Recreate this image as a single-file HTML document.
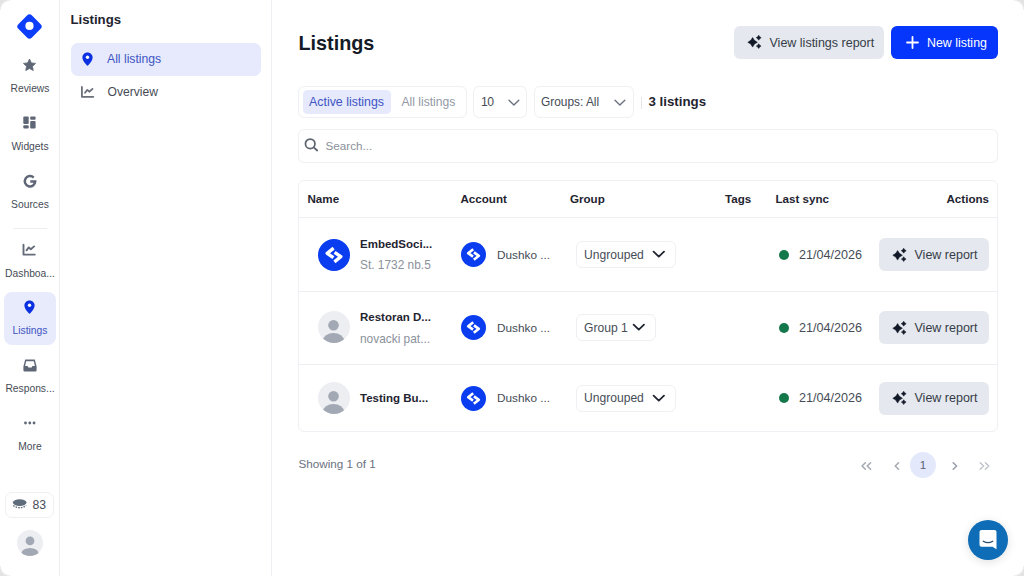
<!DOCTYPE html>
<html><head><meta charset="utf-8">
<style>
*{box-sizing:border-box;margin:0;padding:0}
html,body{width:1024px;height:576px;overflow:hidden;background:#fff}
body{font-family:"Liberation Sans",sans-serif;position:relative;color:#1f2937}
.a{position:absolute}
.t{position:absolute;white-space:nowrap;line-height:20px;height:20px}
.rail{left:0;top:0;width:60px;height:576px;border-right:1px solid #eceef1}
.side{left:60px;top:0;width:212px;height:576px;border-right:1px solid #eceef1}
.rl{font-size:10.3px;color:#464c56;width:60px;text-align:center;left:0}
.box{border:1px solid #eef0f3;border-radius:6px;background:#fff}
.th{font-size:11.6px;font-weight:bold;color:#1f2430}
.nm{font-size:11.5px;font-weight:bold;color:#1f2430}
.sub{font-size:11.9px;color:#8b919b}
.acc{font-size:11.8px;color:#464c56}
.dd{border:1px solid #eef0f3;border-radius:6px;height:27px}
.btn{background:#e5e8ee;border-radius:6px}
.date{font-size:12.6px;color:#464c56}
svg{position:absolute;overflow:visible}
</style></head>
<body>
<!-- RAIL -->
<div class="a rail"></div>
<svg style="left:17.2px;top:13.6px" width="25" height="25" viewBox="0 0 25 25">
  <rect x="3" y="3" width="19" height="19" rx="3.2" transform="rotate(45 12.5 12.5)" fill="#0d3efc"/>
  <circle cx="12.5" cy="11.9" r="4.1" fill="#fff"/>
</svg>
<!-- star -->
<svg style="left:22px;top:58px" width="15" height="14" viewBox="0 0 24 24">
  <path d="M12 1.8l3.1 6.6 7.2.9-5.3 5 1.4 7.1L12 18l-6.4 3.4 1.4-7.1-5.3-5 7.2-.9z" fill="#5f6776" stroke="#5f6776" stroke-width="1.5" stroke-linejoin="round"/>
</svg>
<div class="t rl" style="top:78.8px">Reviews</div>
<!-- widgets -->
<svg style="left:23.3px;top:116px" width="13" height="13" viewBox="0 0 13 13" fill="#5f6776">
  <rect x="0.3" y="0.4" width="5.4" height="7.6" rx="1"/>
  <rect x="0.3" y="9.3" width="5.4" height="3.3" rx="1"/>
  <rect x="7.2" y="0.4" width="5.4" height="3.3" rx="1"/>
  <rect x="7.2" y="5" width="5.4" height="7.6" rx="1"/>
</svg>
<div class="t rl" style="top:137px">Widgets</div>
<!-- G -->
<svg style="left:23px;top:173.6px" width="14" height="14" viewBox="0 0 14 14">
  <path d="M10.7 3.6A5.2 5.2 0 1 0 12.2 7.4H7.3" fill="none" stroke="#5f6776" stroke-width="2.5"/>
</svg>
<div class="t rl" style="top:195px">Sources</div>
<div class="a" style="left:13px;top:228px;width:34px;height:1px;background:#eceef1"></div>
<!-- chart -->
<svg style="left:22.1px;top:243px" width="14" height="13" viewBox="0 0 14 13">
  <path d="M1.5 1.8v9.8h11.3" fill="none" stroke="#646b78" stroke-width="1.9" stroke-linecap="round" stroke-linejoin="round"/>
  <path d="M4.5 7.3L6.8 4.4 8.8 6.2l3.3-2.8" fill="none" stroke="#646b78" stroke-width="1.9" stroke-linecap="round" stroke-linejoin="round"/>
</svg>
<div class="t rl" style="top:264px">Dashboa...</div>
<div class="a" style="left:3.5px;top:292px;width:52.5px;height:53px;background:#e8ebfb;border-radius:8px"></div>
<!-- pin -->
<svg style="left:23.9px;top:300px" width="11" height="14" viewBox="0 0 11 14">
  <path d="M5.5 0.4C2.6 0.4 0.4 2.6 0.4 5.4c0 3.3 4.2 7.9 5.1 8.3.9-.4 5.1-5 5.1-8.3C10.6 2.6 8.4 0.4 5.5 0.4z" fill="#0a30e2"/>
  <circle cx="5.5" cy="5.3" r="1.7" fill="#fff"/>
</svg>
<div class="t rl" style="top:321px;color:#4055c4">Listings</div>
<!-- inbox -->
<svg style="left:23px;top:359px" width="14" height="13" viewBox="0 0 14 13">
  <path d="M2.2 0.6h9.6l1.8 7v3.6a1.4 1.4 0 0 1-1.4 1.4H1.8A1.4 1.4 0 0 1 0.4 11.2V7.6z" fill="#5f6776"/>
  <path d="M3.2 2.3h7.6l1.1 4.6H9.4l-.8 1.6H5.4l-.8-1.6H2.1z" fill="#fff"/>
</svg>
<div class="t rl" style="top:378.8px">Respons...</div>
<svg style="left:23px;top:421px" width="14" height="4" viewBox="0 0 14 4" fill="#5f6776">
  <circle cx="2.5" cy="2" r="1.4"/><circle cx="6.8" cy="2" r="1.4"/><circle cx="11.05" cy="2" r="1.4"/>
</svg>
<div class="t rl" style="top:437px">More</div>
<div class="a" style="left:5px;top:492px;width:48.5px;height:26px;border:1px solid #eef0f3;border-radius:7px"></div>
<svg style="left:12px;top:498px" width="16" height="12" viewBox="0 0 16 12">
  <ellipse cx="7.7" cy="4.6" rx="6.8" ry="3.4" fill="#5f6c7c"/>
  <path d="M1.2 7.5 Q7.7 12 14.2 7.5" fill="none" stroke="#5f6c7c" stroke-width="1.3" stroke-dasharray="1.6 1.1"/>
</svg>
<div class="t" style="left:32.5px;top:494.5px;font-size:12.2px;color:#464c56">83</div>
<svg style="left:16.5px;top:529.5px" width="26" height="26" viewBox="0 0 32 32">
  <defs><clipPath id="cu"><circle cx="16" cy="16" r="16"/></clipPath></defs>
  <circle cx="16" cy="16" r="16" fill="#eceef2"/>
  <g clip-path="url(#cu)" fill="#a3a9b4"><circle cx="16" cy="13.5" r="5.4"/><ellipse cx="16" cy="28.5" rx="10.5" ry="6.5"/></g>
</svg>

<!-- SECONDARY SIDEBAR -->
<div class="a side"></div>
<div class="t" style="left:70.5px;top:9.5px;font-size:13.2px;font-weight:bold;color:#1f2430">Listings</div>
<div class="a" style="left:71px;top:43px;width:190px;height:33px;background:#e6eafc;border-radius:7px"></div>
<svg style="left:82px;top:51.5px" width="11" height="14" viewBox="0 0 11 14">
  <path d="M5.5 0.4C2.6 0.4 0.4 2.6 0.4 5.4c0 3.3 4.2 7.9 5.1 8.3.9-.4 5.1-5 5.1-8.3C10.6 2.6 8.4 0.4 5.5 0.4z" fill="#0a30e2"/>
  <circle cx="5.5" cy="5.3" r="1.7" fill="#fff"/>
</svg>
<div class="t" style="left:107px;top:49.3px;font-size:12.2px;color:#4055c4">All listings</div>
<svg style="left:81px;top:85.5px" width="14" height="13" viewBox="0 0 14 13">
  <path d="M0.9 0.9v9.9h11.4" fill="none" stroke="#6a707b" stroke-width="1.8" stroke-linecap="round" stroke-linejoin="round"/>
  <path d="M4 6.7L6.3 3.9 8.3 5.7l3.2-2.8" fill="none" stroke="#6a707b" stroke-width="1.8" stroke-linecap="round" stroke-linejoin="round"/>
</svg>
<div class="t" style="left:107.5px;top:82.2px;font-size:12.1px;color:#464c56">Overview</div>

<!-- MAIN -->
<div class="t" style="left:298.5px;top:33px;font-size:19.8px;font-weight:bold;color:#141a26;line-height:20px">Listings</div>

<div class="a btn" style="left:734px;top:26px;width:150px;height:33px"></div>
<svg style="left:742px;top:30px" width="24" height="24" viewBox="0 0 24 24" fill="#111827">
  <path d="M10.60 7.50Q11.94 10.96 15.40 12.30Q11.94 13.64 10.60 17.10Q9.26 13.64 5.80 12.30Q9.26 10.96 10.60 7.50ZM16.70 5.20Q17.45 6.95 19.20 7.70Q17.45 8.45 16.70 10.20Q15.95 8.45 14.20 7.70Q15.95 6.95 16.70 5.20ZM16.70 13.70Q17.42 15.38 19.10 16.10Q17.42 16.82 16.70 18.50Q15.98 16.82 14.30 16.10Q15.98 15.38 16.70 13.70Z" stroke="#111827" stroke-width="0.5" stroke-linejoin="round"/>
</svg>
<div class="t" style="left:769.5px;top:32.5px;font-size:12.5px;color:#353c48">View listings report</div>

<div class="a" style="left:891px;top:26px;width:107px;height:33px;background:#0635fb;border-radius:6px"></div>
<svg style="left:905.5px;top:36px" width="13" height="13" viewBox="0 0 13 13">
  <path d="M6.5 1v11M1 6.5h11" stroke="#fff" stroke-width="1.8" stroke-linecap="round"/>
</svg>
<div class="t" style="left:927px;top:32.5px;font-size:12.4px;color:#fff">New listing</div>

<!-- filters -->
<div class="a box" style="left:298px;top:86px;width:169px;height:32px"></div>
<div class="a" style="left:303px;top:90.3px;width:88px;height:24px;background:#e6eafc;border-radius:4.5px"></div>
<div class="t" style="left:309px;top:91.7px;font-size:12.4px;color:#4055c4">Active listings</div>
<div class="t" style="left:401.5px;top:91.7px;font-size:12.1px;color:#9399a3">All listings</div>

<div class="a box" style="left:473px;top:86px;width:54px;height:32px"></div>
<div class="t" style="left:481px;top:91.7px;font-size:12.2px;color:#464c56;letter-spacing:-0.6px">10</div>
<svg style="left:508px;top:99px" width="12" height="8" viewBox="0 0 12 8">
  <path d="M1 1.2l4.9 4.9 4.9-4.9" fill="none" stroke="#6b7280" stroke-width="1.4" stroke-linecap="round" stroke-linejoin="round"/>
</svg>
<div class="a box" style="left:534px;top:86px;width:100px;height:32px"></div>
<div class="t" style="left:541px;top:91.7px;font-size:11.9px;color:#464c56">Groups: All</div>
<svg style="left:614px;top:99px" width="12" height="8" viewBox="0 0 12 8">
  <path d="M1 1.2l4.9 4.9 4.9-4.9" fill="none" stroke="#6b7280" stroke-width="1.4" stroke-linecap="round" stroke-linejoin="round"/>
</svg>
<div class="a" style="left:640.5px;top:96.5px;width:1px;height:12px;background:#e3e5e9"></div>
<div class="t" style="left:648.5px;top:91.5px;font-size:13.3px;font-weight:bold;color:#1f2430">3 listings</div>

<!-- search -->
<div class="a box" style="left:298px;top:129px;width:700px;height:34px"></div>
<svg style="left:304px;top:138px" width="14" height="14" viewBox="0 0 14 14">
  <circle cx="6.2" cy="5.75" r="4.75" fill="none" stroke="#5f6570" stroke-width="1.75"/>
  <path d="M9.7 9.3l3.5 3.2" stroke="#5f6570" stroke-width="1.8" stroke-linecap="round"/>
</svg>
<div class="t" style="left:325.5px;top:136.1px;font-size:11.7px;color:#8b919b">Search...</div>

<!-- table -->
<div class="a box" style="left:298px;top:180px;width:700px;height:252px"></div>
<div class="a" style="left:299px;top:217px;width:698px;height:1px;background:#eceef1"></div>
<div class="a" style="left:299px;top:291px;width:698px;height:1px;background:#eceef1"></div>
<div class="a" style="left:299px;top:364px;width:698px;height:1px;background:#eceef1"></div>
<div class="t th" style="left:307.5px;top:189.2px">Name</div>
<div class="t th" style="left:460.5px;top:189.2px">Account</div>
<div class="t th" style="left:570px;top:189.2px">Group</div>
<div class="t th" style="left:725px;top:189.2px">Tags</div>
<div class="t th" style="left:775.5px;top:189.2px">Last sync</div>
<div class="t th" style="left:946.5px;top:189.2px">Actions</div>

<!-- row 1 -->
<svg style="left:318px;top:239px" width="32" height="32" viewBox="0 0 32 32">
  <circle cx="16" cy="16" r="16" fill="#0a3cf0"/>
  <path d="M15.6 9.2L9.2 14.3l6.2 4.4" fill="none" stroke="#fff" stroke-width="3.4" stroke-linejoin="round"/>
  <path d="M16.6 13.3l6.2 4.4-6.4 5.1" fill="none" stroke="#fff" stroke-width="3.4" stroke-linejoin="round"/>
</svg>
<div class="t nm" style="left:360px;top:233.8px">EmbedSoci...</div>
<div class="t sub" style="left:360px;top:255.1px">St. 1732 nb.5</div>
<svg style="left:461.2px;top:242px" width="25" height="25" viewBox="0 0 32 32">
  <circle cx="16" cy="16" r="16" fill="#0a3cf0"/>
  <path d="M15.6 9.2L9.2 14.3l6.2 4.4" fill="none" stroke="#fff" stroke-width="3.4" stroke-linejoin="round"/>
  <path d="M16.6 13.3l6.2 4.4-6.4 5.1" fill="none" stroke="#fff" stroke-width="3.4" stroke-linejoin="round"/>
</svg>
<div class="t acc" style="left:497px;top:244.7px">Dushko ...</div>
<div class="a dd" style="left:576px;top:241px;width:99.5px"></div>
<div class="t" style="left:584px;top:244.5px;font-size:12.1px;color:#464c56">Ungrouped</div>
<svg style="left:651.5px;top:250px" width="14" height="8" viewBox="0 0 14 8">
  <path d="M1.6 1.7l5.2 4.9 5.2-4.9" fill="none" stroke="#1f2430" stroke-width="1.8" stroke-linecap="round" stroke-linejoin="round"/>
</svg>
<div class="a" style="left:779px;top:250px;width:10px;height:10px;border-radius:50%;background:#14784a"></div>
<div class="t date" style="left:799px;top:244.7px">21/04/2026</div>
<div class="a btn" style="left:879px;top:238px;width:110px;height:33px"></div>
<svg style="left:887px;top:242.5px" width="24" height="24" viewBox="0 0 24 24" fill="#111827">
  <path d="M10.60 7.50Q11.94 10.96 15.40 12.30Q11.94 13.64 10.60 17.10Q9.26 13.64 5.80 12.30Q9.26 10.96 10.60 7.50ZM16.70 5.20Q17.45 6.95 19.20 7.70Q17.45 8.45 16.70 10.20Q15.95 8.45 14.20 7.70Q15.95 6.95 16.70 5.20ZM16.70 13.70Q17.42 15.38 19.10 16.10Q17.42 16.82 16.70 18.50Q15.98 16.82 14.30 16.10Q15.98 15.38 16.70 13.70Z" stroke="#111827" stroke-width="0.5" stroke-linejoin="round"/>
</svg>
<div class="t" style="left:914.5px;top:244.7px;font-size:12.5px;color:#353c48">View report</div>

<!-- row 2 -->
<svg style="left:318px;top:311px" width="32" height="32" viewBox="0 0 32 32">
  <defs><clipPath id="c2"><circle cx="16" cy="16" r="16"/></clipPath></defs>
  <circle cx="16" cy="16" r="16" fill="#eceef2"/>
  <g clip-path="url(#c2)" fill="#a3a9b4"><circle cx="15.5" cy="14.3" r="5.3"/><ellipse cx="15.5" cy="29.5" rx="10.5" ry="7.5"/></g>
</svg>
<div class="t nm" style="left:360px;top:307px">Restoran D...</div>
<div class="t sub" style="left:360px;top:328.8px">novacki pat...</div>
<svg style="left:461.2px;top:315px" width="25" height="25" viewBox="0 0 32 32">
  <circle cx="16" cy="16" r="16" fill="#0a3cf0"/>
  <path d="M15.6 9.2L9.2 14.3l6.2 4.4" fill="none" stroke="#fff" stroke-width="3.4" stroke-linejoin="round"/>
  <path d="M16.6 13.3l6.2 4.4-6.4 5.1" fill="none" stroke="#fff" stroke-width="3.4" stroke-linejoin="round"/>
</svg>
<div class="t acc" style="left:497px;top:317.7px">Dushko ...</div>
<div class="a dd" style="left:576px;top:314px;width:80px"></div>
<div class="t" style="left:584px;top:317.5px;font-size:12.1px;color:#464c56">Group 1</div>
<svg style="left:632px;top:323px" width="14" height="8" viewBox="0 0 14 8">
  <path d="M1.6 1.7l5.2 4.9 5.2-4.9" fill="none" stroke="#1f2430" stroke-width="1.8" stroke-linecap="round" stroke-linejoin="round"/>
</svg>
<div class="a" style="left:779px;top:323px;width:10px;height:10px;border-radius:50%;background:#14784a"></div>
<div class="t date" style="left:799px;top:317.7px">21/04/2026</div>
<div class="a btn" style="left:879px;top:311px;width:110px;height:33px"></div>
<svg style="left:887px;top:315.5px" width="24" height="24" viewBox="0 0 24 24" fill="#111827">
  <path d="M10.60 7.50Q11.94 10.96 15.40 12.30Q11.94 13.64 10.60 17.10Q9.26 13.64 5.80 12.30Q9.26 10.96 10.60 7.50ZM16.70 5.20Q17.45 6.95 19.20 7.70Q17.45 8.45 16.70 10.20Q15.95 8.45 14.20 7.70Q15.95 6.95 16.70 5.20ZM16.70 13.70Q17.42 15.38 19.10 16.10Q17.42 16.82 16.70 18.50Q15.98 16.82 14.30 16.10Q15.98 15.38 16.70 13.70Z" stroke="#111827" stroke-width="0.5" stroke-linejoin="round"/>
</svg>
<div class="t" style="left:914.5px;top:317.7px;font-size:12.5px;color:#353c48">View report</div>

<!-- row 3 -->
<svg style="left:318px;top:382px" width="32" height="32" viewBox="0 0 32 32">
  <defs><clipPath id="c3"><circle cx="16" cy="16" r="16"/></clipPath></defs>
  <circle cx="16" cy="16" r="16" fill="#eceef2"/>
  <g clip-path="url(#c3)" fill="#a3a9b4"><circle cx="15.5" cy="14.3" r="5.3"/><ellipse cx="15.5" cy="29.5" rx="10.5" ry="7.5"/></g>
</svg>
<div class="t nm" style="left:360px;top:388px">Testing Bu...</div>
<svg style="left:461.2px;top:385.5px" width="25" height="25" viewBox="0 0 32 32">
  <circle cx="16" cy="16" r="16" fill="#0a3cf0"/>
  <path d="M15.6 9.2L9.2 14.3l6.2 4.4" fill="none" stroke="#fff" stroke-width="3.4" stroke-linejoin="round"/>
  <path d="M16.6 13.3l6.2 4.4-6.4 5.1" fill="none" stroke="#fff" stroke-width="3.4" stroke-linejoin="round"/>
</svg>
<div class="t acc" style="left:497px;top:388px">Dushko ...</div>
<div class="a dd" style="left:576px;top:384.5px;width:99.5px"></div>
<div class="t" style="left:584px;top:388px;font-size:12.1px;color:#464c56">Ungrouped</div>
<svg style="left:651.5px;top:393.5px" width="14" height="8" viewBox="0 0 14 8">
  <path d="M1.6 1.7l5.2 4.9 5.2-4.9" fill="none" stroke="#1f2430" stroke-width="1.8" stroke-linecap="round" stroke-linejoin="round"/>
</svg>
<div class="a" style="left:779px;top:393px;width:10px;height:10px;border-radius:50%;background:#14784a"></div>
<div class="t date" style="left:799px;top:388px">21/04/2026</div>
<div class="a btn" style="left:879px;top:381.5px;width:110px;height:33px"></div>
<svg style="left:887px;top:386px" width="24" height="24" viewBox="0 0 24 24" fill="#111827">
  <path d="M10.60 7.50Q11.94 10.96 15.40 12.30Q11.94 13.64 10.60 17.10Q9.26 13.64 5.80 12.30Q9.26 10.96 10.60 7.50ZM16.70 5.20Q17.45 6.95 19.20 7.70Q17.45 8.45 16.70 10.20Q15.95 8.45 14.20 7.70Q15.95 6.95 16.70 5.20ZM16.70 13.70Q17.42 15.38 19.10 16.10Q17.42 16.82 16.70 18.50Q15.98 16.82 14.30 16.10Q15.98 15.38 16.70 13.70Z" stroke="#111827" stroke-width="0.5" stroke-linejoin="round"/>
</svg>
<div class="t" style="left:914.5px;top:388px;font-size:12.5px;color:#353c48">View report</div>

<!-- footer -->
<div class="t" style="left:298.5px;top:454px;font-size:11.7px;color:#6b7280">Showing 1 of 1</div>
<svg style="left:860px;top:461px" width="13" height="10" viewBox="0 0 13 10">
  <path d="M5.4 1.7L2 5l3.4 3.3M10.6 1.7L7.2 5l3.4 3.3" fill="none" stroke="#a3a8b1" stroke-width="1.5" stroke-linecap="round" stroke-linejoin="round"/>
</svg>
<svg style="left:893px;top:461px" width="8" height="10" viewBox="0 0 8 10">
  <path d="M5.6 1.7L2.2 5l3.4 3.3" fill="none" stroke="#a3a8b1" stroke-width="1.5" stroke-linecap="round" stroke-linejoin="round"/>
</svg>
<div class="a" style="left:910px;top:451.5px;width:26px;height:26px;border-radius:50%;background:#e4e8fb"></div>
<div class="t" style="left:910px;top:454.5px;width:26px;text-align:center;font-size:11.6px;color:#5c6478">1</div>
<svg style="left:950.5px;top:461px" width="8" height="10" viewBox="0 0 8 10">
  <path d="M2.2 1.7L5.6 5 2.2 8.3" fill="none" stroke="#979ca6" stroke-width="1.5" stroke-linecap="round" stroke-linejoin="round"/>
</svg>
<svg style="left:977.5px;top:461px" width="13" height="10" viewBox="0 0 13 10">
  <path d="M2.2 1.7L5.6 5 2.2 8.3M7.4 1.7L10.8 5 7.4 8.3" fill="none" stroke="#c0c4cb" stroke-width="1.5" stroke-linecap="round" stroke-linejoin="round"/>
</svg>

<!-- chat -->
<div class="a" style="left:968px;top:520px;width:40px;height:40px;border-radius:50%;background:#0e6db6;box-shadow:0 2px 10px rgba(0,0,0,.12)"></div>
<svg style="left:978px;top:529px" width="20" height="22" viewBox="0 0 20 22">
  <path d="M3.5 1h13a2 2 0 0 1 2 2v17.3l-4-2.6H3.5a2 2 0 0 1-2-2V3a2 2 0 0 1 2-2z" fill="#fff"/>
  <path d="M5.3 12.2q4.7 3 9.4 0" fill="none" stroke="#2a4d6e" stroke-width="1.3" stroke-linecap="round"/>
</svg>
<div class="a" style="left:0;top:0;width:10px;height:10px;background:radial-gradient(circle at 10px 10px,rgba(0,0,0,0) 8.5px,rgba(0,0,0,.11) 10.5px)"></div>
<div class="a" style="right:0;top:0;width:10px;height:10px;background:radial-gradient(circle at 0 10px,rgba(0,0,0,0) 8.5px,rgba(0,0,0,.11) 10.5px)"></div>
<div class="a" style="left:0;bottom:0;width:10px;height:10px;background:radial-gradient(circle at 10px 0,rgba(0,0,0,0) 8.5px,rgba(0,0,0,.11) 10.5px)"></div>
<div class="a" style="right:0;bottom:0;width:10px;height:10px;background:radial-gradient(circle at 0 0,rgba(0,0,0,0) 8.5px,rgba(0,0,0,.11) 10.5px)"></div>
</body></html>
